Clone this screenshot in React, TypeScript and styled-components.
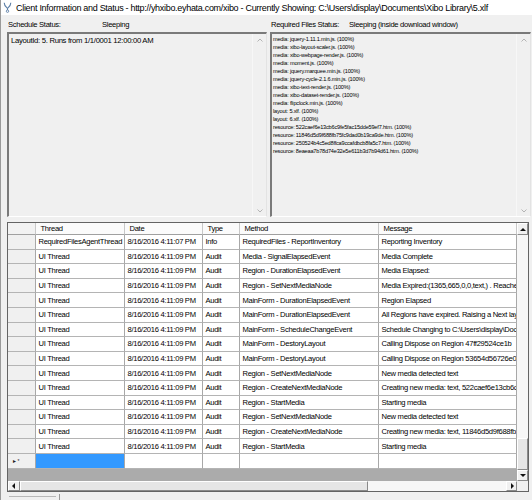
import React from 'react';
import styled, { createGlobalStyle } from 'styled-components';

const FONT = `"Liberation Sans", Arial, sans-serif`;

const Global = createGlobalStyle`
  html, body { margin: 0; padding: 0; background: #f0f0f0; }
  body { font-family: ${FONT}; color: #000; }
  * { box-sizing: border-box; }
`;

const Window = styled.div`
  width: 532px;
  height: 500px;
  overflow: hidden;
  background: #f0f0f0;
  border-left: 1px solid #9a9a9a;
  display: flex;
  flex-direction: column;
`;

const TitleBar = styled.div`
  height: 15px;
  background: #fff;
  display: flex;
  align-items: center;
  padding-left: 2px;
  gap: 4px;
`;

const TitleText = styled.span`
  font-size: 9px;
  letter-spacing: -0.3px;
  white-space: nowrap;
  color: #000;
`;

const Body = styled.div`
  flex: 1;
  display: flex;
  flex-direction: column;
  padding: 0 0 0 6px;
`;

const StatusPanels = styled.div`
  display: grid;
  grid-template-columns: 260px 261px;
  column-gap: 3px;
`;

const StatusColumn = styled.div`
  display: flex;
  flex-direction: column;
`;

const StatusLabelRow = styled.div<{ $valueAt: number }>`
  height: 17px;
  display: grid;
  grid-template-columns: ${(p) => p.$valueAt}px auto;
  align-items: center;
  padding: 2px 0 0 1px;
  font-size: 7.6px;
  letter-spacing: -0.3px;
  white-space: nowrap;
`;

const TextBox = styled.div`
  height: 185px;
  display: flex;
  background: #f0f0f0;
  border-style: solid;
  border-width: 2px 1px 1px 2px;
  border-color: #7a7a7a #e3e3e3 #ffffff #7a7a7a;
`;

const TextContent = styled.div<{ $small?: boolean }>`
  flex: 1;
  padding: ${(p) => (p.$small ? '1px 1px' : '2px 2px')};
  font-size: ${(p) => (p.$small ? '5.6px' : '7.7px')};
  letter-spacing: ${(p) => (p.$small ? '-0.2px' : '-0.3px')};
  line-height: ${(p) => (p.$small ? '8px' : '10px')};
  white-space: nowrap;
  overflow: hidden;
`;

const ScrollStrip = styled.div`
  width: 14px;
  display: flex;
  flex-direction: column;
  justify-content: space-between;
  align-items: center;
  padding: 4px 0 3px;
  border-left: 1px solid #f7f7f7;
`;

const Chevron = ({ down }: { down?: boolean }) => (
  <svg width="6" height="4" viewBox="0 0 6 4">
    <path
      d={down ? 'M0.5 0.5 L3 3 L5.5 0.5' : 'M0.5 3.5 L3 1 L5.5 3.5'}
      fill="none"
      stroke="#b4b4b4"
      strokeWidth="1"
    />
  </svg>
);

const LogFrame = styled.div`
  margin-top: 5px;
  width: 522px;
  border: 1px solid #646464;
  display: flex;
  flex-direction: column;
`;

const GridMain = styled.div`
  height: 258px;
  display: flex;
`;

const TableArea = styled.div`
  width: 509px;
  display: flex;
  flex-direction: column;
  overflow: hidden;
`;

const COLS = '28px 89px 78px 37px 139px 138px';

const Row = styled.div<{ $head?: boolean }>`
  display: grid;
  grid-template-columns: ${COLS};
  height: ${(p) => (p.$head ? '12px' : '14.6px')};
  flex-shrink: 0;
`;

type CellKind = 'corner' | 'head' | 'rowhead' | 'data';

const Cell = styled.div<{ $kind: CellKind; $selected?: boolean }>`
  display: flex;
  align-items: center;
  overflow: hidden;
  white-space: nowrap;
  font-size: 7.6px;
  letter-spacing: -0.3px;
  padding-left: ${(p) => (p.$kind === 'head' ? '4.5px' : p.$kind === 'rowhead' ? '4px' : '2.5px')};
  background: ${(p) =>
    p.$selected
      ? '#3399ff'
      : p.$kind === 'rowhead'
      ? '#f0f0f0'
      : p.$kind === 'corner'
      ? '#f2f2f2'
      : p.$kind === 'head'
      ? '#fbfbfb'
      : '#ffffff'};
  border-right: 1px solid ${(p) => (p.$kind === 'head' || p.$kind === 'corner' ? '#c8c8c8' : '#a8a8a8')};
  border-bottom: 1px solid ${(p) => (p.$kind === 'head' || p.$kind === 'corner' ? '#a0a0a0' : '#b4b4b4')};
`;

const NewRowMark = styled.span`
  font-size: 5px;
  letter-spacing: 0.5px;
  color: #222;
`;

const Workspace = styled.div`
  flex: 1;
  background: #ababab;
`;

const VScroll = styled.div`
  width: 11px;
  display: flex;
  flex-direction: column;
  background: #f6f6f6;
`;

const ScrollButton = styled.div<{ $size: number }>`
  flex: 0 0 ${(p) => p.$size}px;
  display: flex;
  align-items: center;
  justify-content: center;
  background: #f0f0f0;
  border-style: solid;
  border-width: 1px;
  border-color: #ffffff #8a8a8a #8a8a8a #ffffff;
`;

const Track = styled.div<{ $dir: 'v' | 'h' }>`
  flex: 1;
  display: flex;
  flex-direction: ${(p) => (p.$dir === 'v' ? 'column' : 'row')};
  justify-content: ${(p) => (p.$dir === 'v' ? 'flex-end' : 'flex-start')};
  background: #f7f7f7;
`;

const Thumb = styled.div<{ $size: number }>`
  flex: 0 0 ${(p) => p.$size}px;
  background: #e6e6e6;
  border-style: solid;
  border-width: 1px;
  border-color: #ffffff #8a8a8a #8a8a8a #ffffff;
`;

const HScrollRow = styled.div`
  height: 10px;
  display: flex;
`;

const HScroll = styled.div`
  width: 509px;
  display: flex;
`;

const Corner = styled.div`
  flex: 1;
  background: #f0f0f0;
`;

const Footer = styled.div`
  height: 8px;
  display: flex;
  align-items: flex-start;
  padding-left: 2px;
`;

const FooterLine = styled.div`
  width: 47px;
  margin-top: 4px;
  border-top: 1px solid #b8b8b8;
`;

const FooterTick = styled.div`
  width: 1px;
  height: 6px;
  margin: 2px 0 0 3px;
  background: #9a9a9a;
`;

const Arrow = ({ dir }: { dir: 'up' | 'down' | 'left' | 'right' }) => {
  const d = {
    up: 'M0 4 L3 1 L6 4 Z',
    down: 'M0 1 L3 4 L6 1 Z',
    left: 'M4 0 L1 3 L4 6 Z',
    right: 'M2 0 L5 3 L2 6 Z',
  }[dir];
  const v = dir === 'up' || dir === 'down';
  return (
    <svg width="6" height={v ? 5 : 6} viewBox={v ? '0 0 6 5' : '0 0 6 6'}>
      <path d={d} fill="#111" />
    </svg>
  );
};

const AppIcon = () => (
  <svg width="9" height="11" viewBox="0 0 9 11">
    <path d="M1.2 0.8 C1.2 4 3 5 4.5 6.2 C6 5 7.8 4 7.8 0.8" fill="none" stroke="#5b7ea6" strokeWidth="1.1" />
    <path d="M4.5 6.2 L4.5 8" stroke="#5b7ea6" strokeWidth="1.1" />
    <circle cx="4.5" cy="9.2" r="1.2" fill="none" stroke="#5b7ea6" strokeWidth="0.9" />
  </svg>
);

const requiredFiles = [
  'media: jquery-1.11.1.min.js. (100%)',
  'media: xibo-layout-scaler.js. (100%)',
  'media: xibo-webpage-render.js. (100%)',
  'media: moment.js. (100%)',
  'media: jquery.marquee.min.js. (100%)',
  'media: jquery-cycle-2.1.6.min.js. (100%)',
  'media: xibo-text-render.js. (100%)',
  'media: xibo-dataset-render.js. (100%)',
  'media: flipclock.min.js. (100%)',
  'layout: 5.xlf. (100%)',
  'layout: 6.xlf. (100%)',
  'resource: 522caef6e13cb6c9fe5fac15dde59ef7.htm. (100%)',
  'resource: 11846d5d9f688fb75fc9dad0b19ca9de.htm. (100%)',
  'resource: 250524b4c5ed8ffca9ccafdbcb8fa5c7.htm. (100%)',
  'resource: 8eaeaa7b78d74e32e5e611b3d7b94d61.htm. (100%)',
];

const D9 = '8/16/2016 4:11:09 PM';
const logRows: string[][] = [
  ['RequiredFilesAgentThread', '8/16/2016 4:11:07 PM', 'Info', 'RequiredFiles - ReportInventory', 'Reporting Inventory'],
  ['UI Thread', D9, 'Audit', 'Media - SignalElapsedEvent', 'Media Complete'],
  ['UI Thread', D9, 'Audit', 'Region - DurationElapsedEvent', 'Media Elapsed:'],
  ['UI Thread', D9, 'Audit', 'Region - SetNextMediaNode', 'Media Expired:(1365,665,0,0,text,) . Reached end of media'],
  ['UI Thread', D9, 'Audit', 'MainForm - DurationElapsedEvent', 'Region Elapsed'],
  ['UI Thread', D9, 'Audit', 'MainForm - DurationElapsedEvent', 'All Regions have expired. Raising a Next layout event.'],
  ['UI Thread', D9, 'Audit', 'MainForm - ScheduleChangeEvent', 'Schedule Changing to C:\\Users\\display\\Documents\\Xibo Library\\6.xlf'],
  ['UI Thread', D9, 'Audit', 'MainForm - DestoryLayout', 'Calling Dispose on Region 47ff29524ce1b'],
  ['UI Thread', D9, 'Audit', 'MainForm - DestoryLayout', 'Calling Dispose on Region 53654d56726e0'],
  ['UI Thread', D9, 'Audit', 'Region - SetNextMediaNode', 'New media detected text'],
  ['UI Thread', D9, 'Audit', 'Region - CreateNextMediaNode', 'Creating new media: text, 522caef6e13cb6c9fe5fac15dde59ef7'],
  ['UI Thread', D9, 'Audit', 'Region - StartMedia', 'Starting media'],
  ['UI Thread', D9, 'Audit', 'Region - SetNextMediaNode', 'New media detected text'],
  ['UI Thread', D9, 'Audit', 'Region - CreateNextMediaNode', 'Creating new media: text, 11846d5d9f688fb75fc9dad0b19ca9de'],
  ['UI Thread', D9, 'Audit', 'Region - StartMedia', 'Starting media'],
];

const headers = ['Thread', 'Date', 'Type', 'Method', 'Message'];

export default function App() {
  return (
    <>
      <Global />
      <Window>
        <TitleBar>
          <AppIcon />
          <TitleText>
            Client Information and Status - http://yhxibo.eyhata.com/xibo - Currently Showing: C:\Users\display\Documents\Xibo Library\5.xlf
          </TitleText>
        </TitleBar>
        <Body>
          <StatusPanels>
            <StatusColumn>
              <StatusLabelRow $valueAt={94}>
                <span>Schedule Status:</span>
                <span>Sleeping</span>
              </StatusLabelRow>
              <TextBox>
                <TextContent>LayoutId: 5. Runs from 1/1/0001 12:00:00 AM</TextContent>
                <ScrollStrip>
                  <Chevron />
                  <Chevron down />
                </ScrollStrip>
              </TextBox>
            </StatusColumn>
            <StatusColumn>
              <StatusLabelRow $valueAt={78}>
                <span>Required Files Status:</span>
                <span>Sleeping (inside download window)</span>
              </StatusLabelRow>
              <TextBox>
                <TextContent $small>
                  {requiredFiles.map((f) => (
                    <div key={f}>{f}</div>
                  ))}
                </TextContent>
                <ScrollStrip>
                  <Chevron />
                  <Chevron down />
                </ScrollStrip>
              </TextBox>
            </StatusColumn>
          </StatusPanels>

          <LogFrame>
            <GridMain>
              <TableArea>
                <Row $head>
                  <Cell $kind="corner" />
                  {headers.map((h) => (
                    <Cell key={h} $kind="head">
                      {h}
                    </Cell>
                  ))}
                </Row>
                {logRows.map((r, i) => (
                  <Row key={i}>
                    <Cell $kind="rowhead" />
                    {r.map((c, j) => (
                      <Cell key={j} $kind="data">
                        {c}
                      </Cell>
                    ))}
                  </Row>
                ))}
                <Row>
                  <Cell $kind="rowhead">
                    <NewRowMark>►*</NewRowMark>
                  </Cell>
                  <Cell $kind="data" $selected />
                  <Cell $kind="data" />
                  <Cell $kind="data" />
                  <Cell $kind="data" />
                  <Cell $kind="data" />
                </Row>
                <Workspace />
              </TableArea>
              <VScroll>
                <ScrollButton $size={12}>
                  <Arrow dir="up" />
                </ScrollButton>
                <Track $dir="v">
                  <Thumb $size={32} />
                </Track>
                <ScrollButton $size={11}>
                  <Arrow dir="down" />
                </ScrollButton>
              </VScroll>
            </GridMain>
            <HScrollRow>
              <HScroll>
                <ScrollButton $size={12}>
                  <Arrow dir="left" />
                </ScrollButton>
                <Track $dir="h">
                  <Thumb $size={348} />
                </Track>
                <ScrollButton $size={11}>
                  <Arrow dir="right" />
                </ScrollButton>
              </HScroll>
              <Corner />
            </HScrollRow>
          </LogFrame>
          <Footer>
            <FooterLine />
            <FooterTick />
          </Footer>
        </Body>
      </Window>
    </>
  );
}
